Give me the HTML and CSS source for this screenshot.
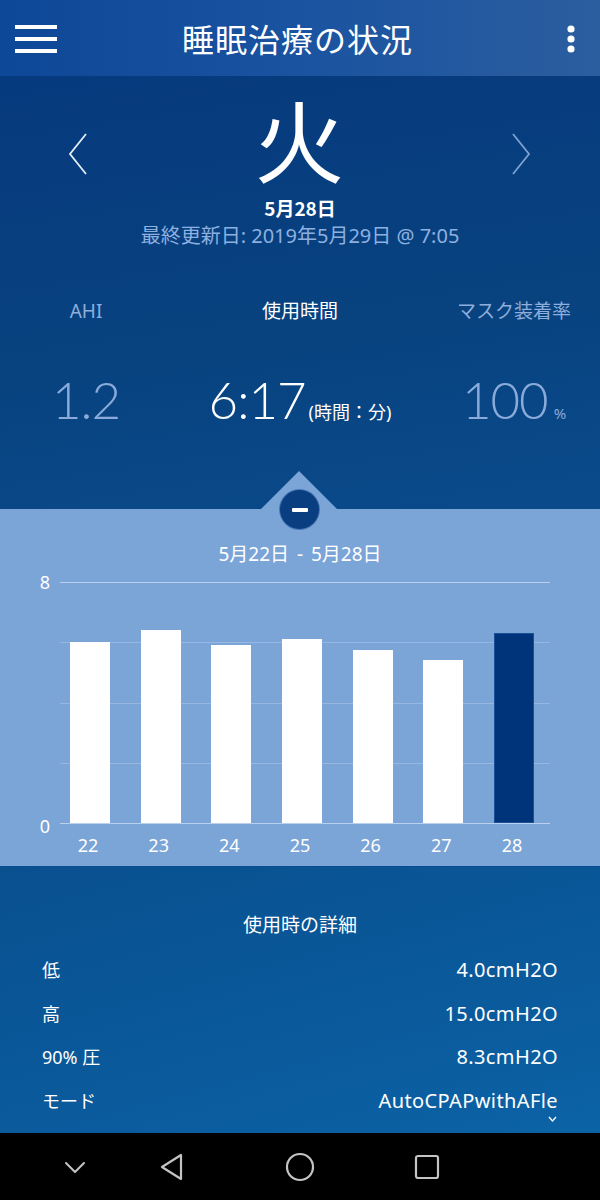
FILE: index.html
```html
<!DOCTYPE html>
<html lang="ja">
<head>
<meta charset="utf-8">
<title>睡眠治療の状況</title>
<link rel="stylesheet" href="styles.css">
</head>
<body>
<div class="screen">
  <header class="appbar">
    <svg class="hamburger" width="42" height="30" viewBox="0 0 42 30"><rect x="0" y="1" width="42" height="4" fill="#fff"/><rect x="0" y="13" width="42" height="4" fill="#fff"/><rect x="0" y="25" width="42" height="4" fill="#fff"/></svg>
    <h1 class="title">睡眠治療の状況</h1>
    <svg class="kebab" width="10" height="30" viewBox="0 0 10 30"><circle cx="5" cy="5" r="3.6" fill="#fff"/><circle cx="5" cy="15" r="3.6" fill="#fff"/><circle cx="5" cy="25" r="3.6" fill="#fff"/></svg>
  </header>

  <section class="summary">
    <div class="day-row">
      <svg class="chev" width="20" height="42" viewBox="0 0 20 42"><polyline points="18,1 2,21 18,41" fill="none" stroke="#e6eef8" stroke-width="1.8"/></svg>
      <div class="day">火</div>
      <svg class="chev" width="20" height="42" viewBox="0 0 20 42"><polyline points="2,1 18,21 2,41" fill="none" stroke="#7ea2d3" stroke-width="1.8"/></svg>
    </div>
    <div class="date">5月28日</div>
    <div class="updated">最終更新日: 2019年5月29日 @ 7:05</div>
    <div class="metrics">
      <div class="metric muted">AHI</div>
      <div class="metric active">使用時間</div>
      <div class="metric muted">マスク装着率</div>
    </div>
    <div class="values">
      <div class="value muted">1.2</div>
      <div class="value active">6:17<span class="unit">(時間：分)</span></div>
      <div class="value muted">100<span class="pct">%</span></div>
    </div>
    <div class="tab-notch"></div>
    <div class="toggle"><span class="minus"></span></div>
  </section>

  <section class="chart">
    <div class="range">5月22日 - 5月28日</div>
    <div class="chart-body">
      <div class="y-axis"><span>8</span><span>0</span></div>
      <div class="plot">
        <div class="gridlines">
          <div class="gl strong"></div>
          <div class="gl"></div>
          <div class="gl"></div>
          <div class="gl"></div>
          <div class="gl strong"></div>
        </div>
        <div class="bars">
          <div class="bar" style="height:181px"></div>
          <div class="bar" style="height:193px"></div>
          <div class="bar" style="height:178px"></div>
          <div class="bar" style="height:184px"></div>
          <div class="bar" style="height:173px"></div>
          <div class="bar" style="height:163px"></div>
          <div class="bar current" style="height:190px"></div>
        </div>
      </div>
    </div>
    <div class="x-axis">
      <span>22</span><span>23</span><span>24</span><span>25</span><span>26</span><span>27</span><span>28</span>
    </div>
  </section>

  <section class="details">
    <div class="details-title">使用時の詳細</div>
    <div class="rows">
      <div class="row"><span>低</span><span class="val">4.0cmH2O</span></div>
      <div class="row"><span>高</span><span class="val">15.0cmH2O</span></div>
      <div class="row"><span>90% 圧</span><span class="val">8.3cmH2O</span></div>
      <div class="row"><span>モード</span>
        <span class="val mode">AutoCPAPwithAFle
          <svg class="mode-chev" width="9" height="6" viewBox="0 0 9 6"><polyline points="1,1 4.5,5 8,1" fill="none" stroke="#fff" stroke-width="1.3"/></svg>
        </span>
      </div>
    </div>
  </section>

  <nav class="navbar">
    <svg class="nav-ic nav-down" width="22" height="13" viewBox="0 0 22 13"><polyline points="2,2 11,11 20,2" fill="none" stroke="#c4c4c4" stroke-width="2" stroke-linejoin="round" stroke-linecap="round"/></svg>
    <svg class="nav-ic nav-back" width="24" height="28" viewBox="0 0 24 28"><polygon points="21,2 21,26 2,14" fill="none" stroke="#c4c4c4" stroke-width="2.2" stroke-linejoin="round"/></svg>
    <svg class="nav-ic nav-home" width="30" height="30" viewBox="0 0 30 30"><circle cx="15" cy="15" r="13" fill="none" stroke="#c4c4c4" stroke-width="2.2"/></svg>
    <svg class="nav-ic nav-recent" width="26" height="26" viewBox="0 0 26 26"><rect x="2" y="2" width="22" height="22" rx="2" fill="none" stroke="#c4c4c4" stroke-width="2.2"/></svg>
  </nav>
</div>
</body>
</html>
```

FILE: styles.css
```css
* { box-sizing: border-box; }
html, body { margin: 0; padding: 0; }
body {
  width: 600px;
  height: 1200px;
  overflow: hidden;
  font-family: "Noto Sans", "Noto Sans CJK JP", sans-serif;
  color: #fff;
  background: #000;
}
.screen { width: 600px; height: 1200px; display: flex; flex-direction: column; }

/* App bar */
.appbar {
  height: 77px;
  flex: none;
  display: grid;
  grid-template-columns: 1fr auto 1fr;
  align-items: center;
  padding: 0 24px 0 15px;
  background: linear-gradient(90deg, #0d4797 0%, #1a53a0 50%, #2b5e9f 100%);
  border-bottom: 1px solid #083a7c;
}
.hamburger { justify-self: start; margin-top: 1px; }
.kebab { justify-self: end; margin-top: 1px; }
.title {
  margin: 0;
  font-family: "Noto Sans CJK JP", sans-serif;
  font-weight: 400;
  font-size: 32px;
  line-height: 40px;
  letter-spacing: 1px;
  padding-left: 4px;
}

/* Summary */
.summary {
  position: relative;
  height: 432px;
  flex: none;
  padding-top: 15px;
  background: linear-gradient(172deg, #063a7e 0%, #08427f 55%, #0a4a8b 100%);
}
.day-row {
  display: flex;
  justify-content: space-between;
  align-items: flex-start;
  height: 90px;
  padding: 0 69px 0 68px;
}
.chev { margin-top: 41px; }
.day {
  font-family: "Noto Sans CJK JP", sans-serif;
  font-size: 90px;
  line-height: 90px;
  height: 90px;
  font-weight: 400;
}
.date {
  margin-top: 14px;
  text-align: center;
  font-family: "Noto Sans CJK JP", sans-serif;
  font-weight: 700;
  font-size: 19px;
  line-height: 24px;
}
.updated {
  margin-top: 4px;
  text-align: center;
  font-size: 20px;
  line-height: 24px;
  color: #8db0e0;
}
.metrics, .values {
  display: grid;
  grid-template-columns: 172px 256px 172px;
  text-align: center;
}
.metrics { margin-top: 51px; }
.metric {
  font-size: 19px;
  line-height: 24px;
}
.metric.muted { color: #8eaedb; }
.metric.active { color: #fff; }
.values { margin-top: 47px; }
.value {
  font-family: "Lato", "Roboto", sans-serif;
  font-weight: 300;
  font-size: 51px;
  line-height: 60px;
  letter-spacing: -1px;
  white-space: nowrap;
}
.value.muted { color: #8aabda; }
.value.active { color: #fff; }
.unit {
  font-family: "Noto Sans", "Noto Sans CJK JP", sans-serif;
  font-weight: 400;
  font-size: 18px;
  letter-spacing: 0;
  margin-left: 3px;
}
.pct {
  font-family: "Noto Sans", sans-serif;
  font-weight: 400;
  font-size: 15px;
  letter-spacing: 0;
  margin-left: 6px;
}
.tab-notch {
  position: absolute;
  left: 261px;
  bottom: 0;
  width: 0;
  height: 0;
  border-left: 38px solid transparent;
  border-right: 38px solid transparent;
  border-bottom: 38px solid #7ba4d7;
}
.toggle {
  position: absolute;
  left: 280px;
  bottom: -20px;
  width: 39px;
  height: 39px;
  border-radius: 50%;
  background: #093f81;
  box-shadow: 0 0 0 1px rgba(40, 90, 160, 0.6);
  display: flex;
  align-items: center;
  justify-content: center;
  z-index: 2;
}
.minus { display: block; width: 16px; height: 4px; background: #fff; border-radius: 1px; }

/* Chart */
.chart {
  height: 358px;
  flex: none;
  background: #7ba4d7;
  padding-top: 33px;
  border-bottom: 1px solid #0a4c90;
}
.range {
  text-align: center;
  font-size: 19px;
  line-height: 24px;
  word-spacing: 3px;
}
.chart-body {
  display: flex;
  margin-top: 16px;
}
.y-axis {
  width: 60px;
  padding-right: 10px;
  display: flex;
  flex-direction: column;
  justify-content: space-between;
  align-items: flex-end;
  margin: -10px 0;
  font-size: 18px;
  line-height: 20px;
}
.y-axis span:last-child { position: relative; top: 2px; }
.plot {
  width: 490px;
  height: 242px;
  display: grid;
}
.gridlines, .bars { grid-area: 1 / 1; }
.gridlines {
  display: flex;
  flex-direction: column;
  justify-content: space-between;
}
.gl { height: 1px; background: #95b7e2; }
.gl.strong { background: #b9d0ee; }
.bars {
  display: grid;
  grid-template-columns: repeat(7, 40px);
  column-gap: 30.67px;
  padding-left: 10px;
  align-items: end;
  padding-bottom: 1px;
}
.bar { background: #fff; }
.bar.current { background: #00347a; box-shadow: inset 0 0 0 1px #1b4f95; }
.x-axis {
  display: grid;
  grid-template-columns: repeat(7, 40px);
  column-gap: 30.67px;
  padding-left: 68px;
  margin-top: 9px;
  font-size: 18px;
  line-height: 24px;
  text-align: center;
}

/* Details */
.details {
  height: 266px;
  flex: none;
  padding: 45px 42px 0 42px;
  background: linear-gradient(165deg, #09508f 0%, #0a5a9c 60%, #0b63a6 100%);
}
.details-title {
  text-align: center;
  font-size: 19px;
  line-height: 26px;
}
.rows {
  margin-top: 19px;
  display: flex;
  flex-direction: column;
  gap: 17.5px;
}
.row {
  display: flex;
  justify-content: space-between;
  align-items: flex-start;
  font-size: 18px;
  line-height: 26px;
}
.val { font-size: 20px; letter-spacing: 0.4px; }
.mode {
  display: flex;
  flex-direction: column;
  align-items: flex-end;
}
.mode-chev { margin-top: 2px; margin-right: 1px; }

/* Nav bar */
.navbar {
  flex: 1;
  background: #000;
  display: flex;
  align-items: center;
  padding-left: 64px;
}
.nav-down { margin-top: 1px; }
.nav-back { margin-left: 74px; }
.nav-home { margin-left: 101px; }
.nav-recent { margin-left: 99px; }
```
